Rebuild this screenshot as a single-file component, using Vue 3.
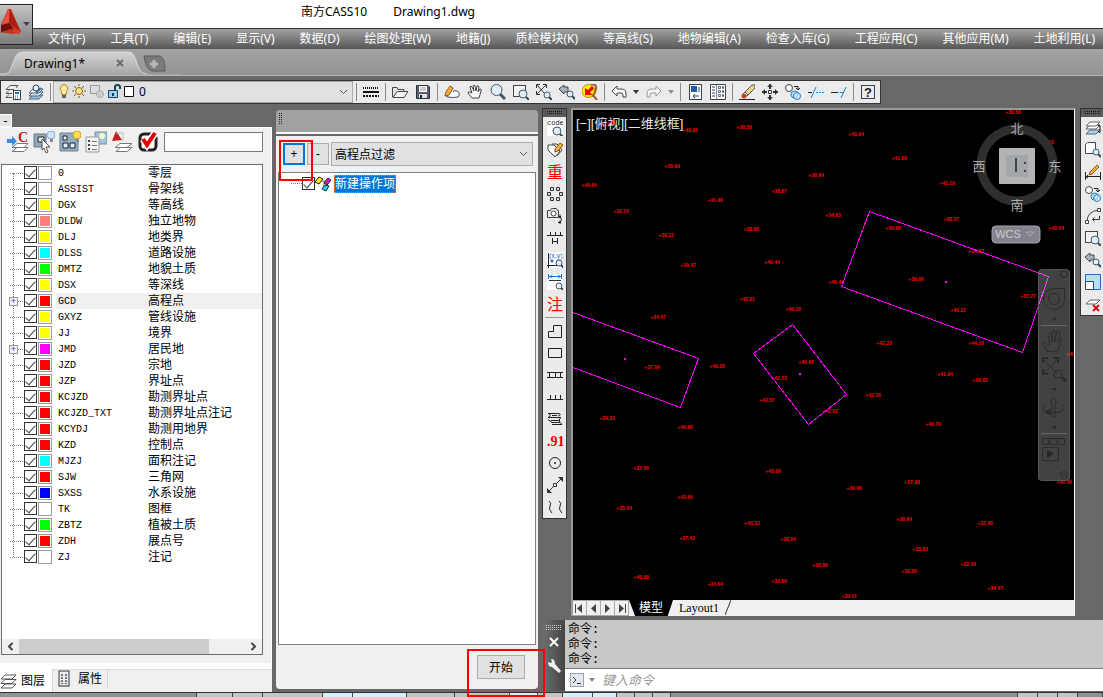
<template>
  <div class="app">
    <header class="title-bar">
      <span>南方CASS10</span>
      <span>Drawing1.dwg</span>
    </header>
    <button class="app-logo" aria-label="应用程序菜单">
      <svg width="31" height="39" viewBox="0 0 31 39">
        <path d="M7 4 L10 4 L20 27 L13 29 L-3 27 Z" fill="#c9311c" />
        <path d="M8 3 L-2 27 L8 18 Z" fill="#e8523a" />
        <path d="M9 5 L8 18 L20 27 Z" fill="#a81f12" />
        <path d="M0 20 L8 18 L15 26 L9 24 L-2 28 Z" fill="#6f0f0a" />
        <path d="M11 22 L20 26 L18 29 L13 28 Z" fill="#d63b22" />
        <path d="M22 17 h7 l-3.5 4 z" fill="#3b4350" />
      </svg>
    </button>

    <nav class="menu-bar">
      <a v-for="m in menus" :key="m" href="#">{{ m }}</a>
    </nav>

    <div class="doc-tabs">
      <svg class="tab-shape" width="180" height="26" viewBox="0 0 180 26">
        <defs>
          <linearGradient id="tabFill" x1="0" y1="0" x2="0" y2="1">
            <stop offset="0" stop-color="#d4d4d4" />
            <stop offset="1" stop-color="#a6a6a6" />
          </linearGradient>
        </defs>
        <path d="M0 25 H5 C14 25 12 3 22 3 H129 C138 3 135 25 147 25 H180 V26 H0 Z" fill="url(#tabFill)" />
        <path d="M0 25 H5 C14 25 12 3 22 3 H129 C138 3 135 25 147 25" fill="none" stroke="#d8d8d8" />
        <path d="M144 7 H160 Q165 9 165 22 H152 Q146 20 144 7 Z" fill="#7c7c7c" stroke="#5a5a5a" />
        <path d="M154 11 v8 M150 15 h8" stroke="#b8b8b8" stroke-width="3" />
        <path d="M117 11 l6 6 M123 11 l-6 6" stroke="#6a6a6a" stroke-width="2" />
      </svg>
      <button class="doc-tab">Drawing1*</button>
    </div>

    <div class="toolbar-row">
      <div class="toolbar">
        <template v-for="(t, i) in toolbar" :key="i">
          <i v-if="t === '|'" class="sep"></i>
          <div v-else-if="t === 'layer'" class="layer-combo">
            <svg width="80" height="18" viewBox="0 0 80 18" v-html="layerState"></svg>
            <select aria-label="当前图层">
              <option>0</option>
            </select>
            <svg class="chevron" width="9" height="6" viewBox="0 0 9 6"><path d="M1 1 L4.5 4.5 L8 1" fill="none" stroke="#555" /></svg>
          </div>
          <button v-else-if="t === 'v' || t === 'w'" class="drop" :class="{ faded: t === 'w' }" aria-label="更多">
            <svg width="6" height="4" viewBox="0 0 6 4"><path d="M0 0 h6 l-3 4 z" fill="#333" /></svg>
          </button>
          <button v-else class="tool" :aria-label="t">
            <svg width="16" height="16" viewBox="0 0 16 16" v-html="icons[t]"></svg>
          </button>
        </template>
      </div>
    </div>

    <main class="main">
      <aside class="layers">
        <button class="collapse" aria-label="折叠">-</button>
        <div class="layers-body">
          <div class="layers-tools">
            <button v-for="t in layerTools" :key="t" :aria-label="t">
              <svg width="22" height="22" viewBox="0 0 22 22" v-html="icons[t]"></svg>
            </button>
            <input v-model="keyword" type="text" aria-label="查找图层" />
          </div>
          <div class="tree-box">
            <ul class="tree">
              <li v-for="l in layers" :key="l.name" :class="{ current: l.name === 'GCD' }">
                <span class="expand"><button v-if="l.children" aria-label="展开">+</button></span>
                <input :id="'layer-' + l.name" v-model="l.on" type="checkbox" />
                <span class="swatch"><i :style="{ background: l.color }"></i></span>
                <label :for="'layer-' + l.name">
                  <span class="name">{{ l.name }}</span>
                  <span>{{ l.text }}</span>
                </label>
              </li>
            </ul>
            <div class="scroll">
              <button aria-label="向左"><svg width="7" height="9" viewBox="0 0 7 9"><path d="M5.5 1 L2 4.5 L5.5 8" fill="none" stroke="#444" stroke-width="2" /></svg></button>
              <div class="track"><div class="thumb"></div></div>
              <button aria-label="向右"><svg width="7" height="9" viewBox="0 0 7 9"><path d="M1.5 1 L5 4.5 L1.5 8" fill="none" stroke="#444" stroke-width="2" /></svg></button>
            </div>
          </div>
        </div>
        <div class="layers-tabs">
          <button class="active">
            <svg width="17" height="16" viewBox="0 0 17 16" v-html="icons.stack"></svg>图层
          </button>
          <button>
            <svg width="12" height="17" viewBox="0 0 12 17"><rect x="1" y="1" width="10" height="15" fill="#e8edf2" stroke="#333" /><path d="M4 4 v10 M8 4 v10" stroke="#777" stroke-width="2" stroke-dasharray="2 1" /></svg>属性
          </button>
        </div>
      </aside>

      <section class="filter">
        <div class="filter-head"><i class="dots"></i></div>
        <div class="filter-body">
          <div class="filter-row">
            <button class="btn primary">+</button>
            <button class="btn">-</button>
            <div class="combo">
              <select aria-label="操作类型">
                <option>高程点过滤</option>
              </select>
              <svg class="chevron" width="9" height="6" viewBox="0 0 9 6"><path d="M1 1 L4.5 4.5 L8 1" fill="none" stroke="#555" /></svg>
            </div>
            <div class="mark mark-add"></div>
          </div>
          <div class="op-box">
            <div class="op">
              <i class="branch"></i>
              <input id="op-1" v-model="opOn" type="checkbox" />
              <svg width="17" height="16" viewBox="0 0 17 16">
                <path d="M7 5 L12 5 M9 5 L9 12" stroke="#777" />
                <path d="M0 6 L4 1 L8 3 L4 8 Z" fill="#ffee00" stroke="#222" />
                <path d="M9 7 L13 2 L16 4 L12 9 Z" fill="#e010c0" stroke="#222" />
                <path d="M7 13 L10 9 L14 10 L11 15 Z" fill="#18d8e8" stroke="#222" />
              </svg>
              <label for="op-1">新建操作项</label>
            </div>
          </div>
          <div class="filter-foot">
            <button class="btn start">开始</button>
            <div class="mark mark-start"></div>
          </div>
        </div>
      </section>

      <section class="work">
        <div class="work-top">
          <div class="strip">
            <i class="grip"></i>
            <template v-for="(t, i) in drawTools" :key="i">
              <i v-if="t === '|'" class="hsep"></i>
              <button v-else class="vtool" :aria-label="t">
                <svg width="16" height="16" viewBox="0 0 16 16" v-html="icons[t]"></svg>
              </button>
            </template>
          </div>

          <div class="view">
            <svg class="canvas" viewBox="573 110 501 490" preserveAspectRatio="xMinYMin slice">
              <g class="heights">
                <text v-for="(p, i) in points" :key="i" :x="p[0]" :y="p[1] + 2">+{{ p[2] }}</text>
              </g>
              <g class="houses">
                <path d="M869.5 211.5 L1048.5 276.5 L1022.5 352.5 L841.5 286.5 Z" />
                <path d="M573 312.5 L698.5 358.5 L680.5 407.5 L573 367.5" />
                <path d="M792.5 324.5 L846.5 394.5 L808.5 424.5 L753.5 353.5 Z" />
              </g>
              <path d="M945 281h2v2h-2z M624 358h2v2h-2z M799 373h2v2h-2z" fill="#f0f" />
              <text class="view-label" x="576" y="128">[−][俯视][二维线框]</text>
              <g class="cube">
                <circle cx="1017" cy="165" r="36" />
                <rect x="999" y="148" width="36" height="36" rx="1" fill="#b4b4b4" />
                <rect x="1006" y="155" width="22" height="22" fill="#a3a7ab" />
                <path d="M1016 158 v14 M1024 163 h2 M1024 171 h2" stroke="#444" stroke-width="2" fill="none" />
                <text x="1017" y="133">北</text>
                <text x="1017" y="210">南</text>
                <text x="979" y="171">西</text>
                <text x="1055" y="171">东</text>
                <rect x="992" y="226" width="48" height="17" rx="4" fill="#83838d" stroke="#a4a4ac" />
                <text class="wcs" x="1008" y="238">WCS</text>
                <path d="M1026 232 h8 l-4 4 z" fill="none" stroke="#aaa" />
              </g>
              <g class="nav">
                <rect x="1038.5" y="269.5" width="31" height="211" rx="3" fill="#fff" fill-opacity=".26" stroke="#555" />
                <path d="M1041 325.5 h26 M1041 433.5 h26" stroke="#666" />
                <g fill="none" stroke="#2b2b2b">
                  <circle cx="1064" cy="274" r="4" fill="#333" stroke="none" />
                  <path d="M1062 272 l4 4 m0 -4 l-4 4" stroke="#555" />
                  <path d="M1054 288.5 h10.5 v10 a10.5 10.5 0 1 1 -10.5 -10 z" />
                  <circle cx="1054" cy="299" r="5.5" />
                  <path d="M1048 352 l-5 -8 q0 -3 3 -1 l3 3 v-12 q2 -3 3 0 v8 v-11 q2 -2 3 0 v11 l2 -10 q2 -2 3 1 l-2 10 l2 -5 q3 -1 2 2 l-4 10 q-4 3 -10 1 z" />
                  <path d="M1043 359 l15 15 M1058 359 l-15 15" />
                  <path d="M1043 363 v-5 h5 M1053 358 h5 v5 M1043 369 v5 h5" stroke-width="2" />
                  <circle cx="1058" cy="374" r="4" />
                  <path d="M1061 377 l5 4" stroke-width="3" />
                  <path d="M1052 417 v-14 h-2 l3.5 -6 l3.5 6 h-2 v14 z" />
                  <path d="M1062 405 q5 3 0 6 q-9 4 -18 0 q-4 -3 2 -6" />
                  <path d="M1050 409 v6 l-5 -3 z" fill="#2b2b2b" />
                  <path d="M1042.5 438.5 h6 v6 h-6 z m8 0 h6 v6 h-6 z m8 0 h6 v6 h-6 z M1042.5 447.5 h16 v13 h-16 z" />
                  <circle cx="1064" cy="475" r="3.5" />
                  <path d="M1062 475 h4" />
                </g>
                <path d="M1047 450 l7 4 l-7 4 z M1052 318 h5 l-2.5 3 z M1052 388 h5 l-2.5 3 z M1052 426 h5 l-2.5 3 z" fill="#262626" />
              </g>
            </svg>
            <div class="sheets">
              <button v-for="(d, i) in pager" :key="i" class="page" aria-label="翻页">
                <svg width="9" height="9" viewBox="0 0 9 9"><path :d="d" fill="#444" /></svg>
              </button>
              <button class="sheet model">模型</button>
              <button class="sheet">Layout1</button>
              <svg class="slash" width="6" height="15" viewBox="0 0 6 15"><path d="M0 15 L6 0" stroke="#333" /></svg>
            </div>
          </div>

          <div class="strip right">
            <i class="grip"></i>
            <button v-for="t in editTools" :key="t" class="vtool" :aria-label="t">
              <svg width="16" height="16" viewBox="0 0 16 16" v-html="icons[t]"></svg>
            </button>
          </div>
        </div>

        <div class="command">
          <div class="command-side">
            <i class="dots-h"></i>
            <svg width="10" height="10" viewBox="0 0 10 10"><path d="M1 1 l8 8 M9 1 l-8 8" stroke="#fff" stroke-width="2" /></svg>
            <svg width="15" height="15" viewBox="0 0 15 15"><path d="M1 3 l3 1 l1 -1 l-1 -3 q4 0 4 5 l6 7 l-2 2 l-7 -6 q-4 0 -4 -5 z" fill="#f2f2f2" /></svg>
          </div>
          <div class="command-main">
            <div class="history">
              <p v-for="n in 3" :key="n">命令:</p>
            </div>
            <div class="prompt">
              <svg width="14" height="14" viewBox="0 0 14 14"><rect x="0.5" y="0.5" width="13" height="13" fill="#e3e8ee" stroke="#9aa2ac" /><path d="M3 4 l3 3 l-3 3 M7 10.5 h4" fill="none" stroke="#333" /></svg>
              <svg width="6" height="4" viewBox="0 0 6 4"><path d="M0 0 h6 l-3 4 z" fill="#888" /></svg>
              <input v-model="command" type="text" placeholder="键入命令" aria-label="命令行" />
            </div>
          </div>
        </div>
      </section>
    </main>

    <footer class="status">
      <i v-for="(s, i) in status" :key="i" :class="s[1]" :style="{ flexBasis: s[0] + 'px' }"></i>
    </footer>
  </div>
</template>

<script setup>
import { ref } from 'vue'

const keyword = ref('')
const command = ref('')
const opOn = ref(true)

const menus = [
  '文件(F)', '工具(T)', '编辑(E)', '显示(V)', '数据(D)', '绘图处理(W)', '地籍(J)',
  '质检模块(K)', '等高线(S)', '地物编辑(A)', '检查入库(G)', '工程应用(C)', '其他应用(M)', '土地利用(L)'
]

const toolbar = [
  'layerprops', 'layerprev', '|', 'layer', '|', 'ltype', '|', 'open', 'save', '|',
  'cloud', 'hand', 'zoom', 'zoomwin', 'zoomext', 'zoomprev', 'zoomhot', '|',
  'undo', 'v', 'redo', 'w', '|', 'props', 'palette', '|',
  'erase', 'move', 'copy', 'trim', 'extend', '|', 'help'
]
const layerTools = ['lcass', 'lpick', 'lgroup', 'llist', 'lcad', 'lcheck']
const drawTools = [
  'code', 'tag', 'zhong', 'array', 'camera', 'fence', 'xy', 'dist', 'zhu', '|',
  'poly', 'rect', 'wall', 'ticks', 'scarp', 'elev', 'circle', 'line', 'curve'
]
const editTools = ['layeredit', 'boxzoom', 'dimedit', 'copy', 'arc', 'zoomwin', 'zoomprev', 'region', 'delarea']

const mk = (name, text, color, children = false) => ({ name, text, color, children, on: true })
const layers = ref([
  mk('0', '零层', '#fff'),
  mk('ASSIST', '骨架线', '#fff'),
  mk('DGX', '等高线', '#ff0'),
  mk('DLDW', '独立地物', '#ff7f7f'),
  mk('DLJ', '地类界', '#ff0'),
  mk('DLSS', '道路设施', '#0ff'),
  mk('DMTZ', '地貌土质', '#0f0'),
  mk('DSX', '等深线', '#ff0'),
  mk('GCD', '高程点', '#f00', true),
  mk('GXYZ', '管线设施', '#ff0'),
  mk('JJ', '境界', '#ff0'),
  mk('JMD', '居民地', '#f0f', true),
  mk('JZD', '宗地', '#f00'),
  mk('JZP', '界址点', '#f00'),
  mk('KCJZD', '勘测界址点', '#f00'),
  mk('KCJZD_TXT', '勘测界址点注记', '#f00'),
  mk('KCYDJ', '勘测用地界', '#f00'),
  mk('KZD', '控制点', '#f00'),
  mk('MJZJ', '面积注记', '#0ff'),
  mk('SJW', '三角网', '#f00'),
  mk('SXSS', '水系设施', '#00f'),
  mk('TK', '图框', '#fff'),
  mk('ZBTZ', '植被土质', '#0f0'),
  mk('ZDH', '展点号', '#f00'),
  mk('ZJ', '注记', '#fff')
])

// 高程点: x, y, 高程
const points = [
  [605, 124, '40.02'], [690, 130, '40.05'], [744, 127, '39.58'], [856, 134, '40.04'], [1013, 112, '39.50'],
  [1046, 142, '40.03'], [816, 175, '39.84'], [899, 158, '41.09'], [589, 185, '40.04'], [672, 166, '39.09'],
  [779, 191, '38.87'], [947, 183, '41.19'], [715, 200, '41.48'], [621, 211, '39.74'], [833, 215, '34.93'],
  [666, 235, '39.22'], [751, 229, '38.69'], [893, 228, '40.86'], [951, 219, '38.57'], [976, 251, '39.02'],
  [688, 265, '39.47'], [772, 262, '40.44'], [1056, 228, '40.54'], [747, 299, '40.61'], [836, 282, '40.44'],
  [916, 279, '39.95'], [658, 317, '34.67'], [793, 309, '40.18'], [958, 310, '40.22'], [1028, 296, '37.27'],
  [884, 343, '42.23'], [976, 343, '44.10'], [717, 366, '40.20'], [806, 362, '40.67'], [652, 367, '37.09'],
  [945, 374, '41.04'], [980, 380, '38.05'], [779, 378, '42.53'], [767, 400, '42.57'], [873, 395, '42.26'],
  [830, 411, '42.03'], [933, 424, '40.70'], [607, 418, '39.26'], [685, 427, '40.60'], [641, 468, '37.56'],
  [773, 471, '43.09'], [854, 488, '39.06'], [912, 482, '37.98'], [1064, 482, '40.36'], [685, 497, '43.60'],
  [624, 508, '35.34'], [752, 523, '40.32'], [904, 519, '39.84'], [985, 523, '32.46'], [687, 538, '37.42'],
  [788, 539, '38.04'], [920, 549, '33.83'], [820, 565, '38.80'], [968, 564, '32.18'], [909, 571, '30.09'],
  [641, 577, '40.68'], [715, 584, '34.64'], [779, 581, '34.89'], [995, 588, '34.47'], [849, 596, '39.31'],
  [1074, 354, '40.92']
]

const pager = [
  'M0 0h1v9h-1z M7 0v9l-5 -4.5z',
  'M7 0v9l-5 -4.5z',
  'M2 0v9l5 -4.5z',
  'M8 0h1v9h-1z M2 0v9l5 -4.5z'
]

const status = [
  [197, 'dark'], [36, ''], [30, ''], [60, ''], [30, 'lit'], [54, 'lit'], [48, ''], [55, ''], [28, 'lit'], [25, ''],
  [30, 'lit'], [24, 'lit'], [18, ''], [18, ''], [18, ''], [347, 'dark'], [20, ''], [20, ''], [20, ''], [25, 'dark']
]

// 小放大镜
const mag = (x, y, r = 3) =>
  `<path d="M${x + r - 1} ${y + r - 1} l3 3" stroke="#345" stroke-width="2"/><circle cx="${x}" cy="${y}" r="${r}" fill="#dff0fa" stroke="#445566"/>`
const sheet = (y, fill = '#fff') =>
  `<path d="M1 ${y + 4} L5 ${y} H15 L11 ${y + 4} Z" fill="${fill}" stroke="#5c646e"/>`
const line = (d, c = '#222', w = 1) => `<path d="${d}" fill="none" stroke="${c}" stroke-width="${w}"/>`
const glyph = (s, x, y, size, c) =>
  `<text x="${x}" y="${y}" font-size="${size}" fill="${c}" font-family="'Liberation Sans','Noto Sans CJK SC',sans-serif">${s}</text>`

const icons = {
  layerprops: line('M1 5.5 L5 1.5 H13 L11 4 M1 9.5 L4 6.5 M1 13.5 L4 10.5 M1 5.5 H9 M1 9.5 H7 M1 13.5 H7', '#555') +
    '<rect x="8.5" y="6.5" width="7" height="9" fill="#fff" stroke="#345"/><path d="M10 8h4v2h-4z" fill="#1c6fb8"/><path d="M10 12h1m1 0h1m-3 2h1m1 0h1" stroke="#345"/>',
  layerprev: sheet(11, '#8cc4ea') + sheet(8, '#c8e2f4') + sheet(5) + '<circle cx="8" cy="4" r="3" fill="#eee" stroke="#345"/><path d="M8 9l5 -5" stroke="#1c6fb8" stroke-width="2"/>',
  ltype: '<path d="M0 4h16" stroke="#111" stroke-width="2" stroke-dasharray="1 1"/><path d="M0 8h16" stroke="#111" stroke-width="2"/><path d="M0 12h16" stroke="#111" stroke-width="2" stroke-dasharray="2 1"/>',
  open: '<path d="M0.500 13 V3.500 H5 L6 5.500 H12 V7" fill="#e8e8e8" stroke="#444"/><path d="M1 13.500 L5 7.500 H16 L12 13.500 Z" fill="#f4f4f4" stroke="#444"/>',
  save: '<path d="M1.5 1.5 H13 L14.5 3 V14.5 H1.5 Z" fill="#56606c" stroke="#2b333d"/><path d="M4 2h8v6h-8z" fill="#fff"/><path d="M5 4h6M5 6h6" stroke="#999"/><path d="M4 10h8v4h-8z" fill="#dde"/><path d="M5 11h2v3h-2z" fill="#222"/>',
  cloud: '<path d="M4 9 Q0 12 4 13 Q10 14 14 13 Q17 9 13 7 Q10 6 9 8" fill="#fff" stroke="#446"/><path d="M2 8 L6 2 L9 4 L5 11 L1 12 Z" fill="#f4b13e" stroke="#8a5612"/>',
  hand: '<path d="M5 14 L1 9 Q1 7 3 8 L5 9 L3 3 Q4 1 5 3 L7 7 L6 2 Q7 0 8 2 L9 7 L10 2 Q11 1 12 3 L11 8 L13 5 Q15 5 14 7 L12 14 Z" fill="#fff" stroke="#444"/>',
  zoom: '<path d="M10 10 l5 5" stroke="#445566" stroke-width="3"/><circle cx="6.5" cy="6" r="5.5" fill="#dff0fa" stroke="#445566"/>',
  zoomwin: '<rect x="0.5" y="1.5" width="12" height="11" fill="#f4f4f4" stroke="#444"/>' + mag(10, 10, 4),
  zoomext: line('M1 1 L9 10 M10 1 L1 10 M0.500 4 V0.500 H4 M7 0.500 H10.500 V4 M0.500 7 V10.500 H4', '#333') + mag(11, 11),
  zoomprev: '<path d="M0 5 L5 1 V3 H9 V8 H5 V10 Z" fill="#aab3bd" stroke="#444"/>' + mag(11, 10),
  zoomhot: '<path d="M10 10 l5 6" stroke="#a06020" stroke-width="2"/><circle cx="6.5" cy="7" r="6.5" fill="#ffee00" stroke="#b09000"/><path d="M9 0 q6 0 5 5 t-4 7" fill="none" stroke="#a06020" stroke-width="2"/><path d="M3 4 L3 11 L10 11 L8 8 L12 5 L10 2 L6 6 Z" fill="#e80808"/>',
  undo: '<path d="M1 7 L6 2 V5 H10 Q15 5 15 10 V13 H12 V11 Q12 9 10 9 H6 V12 Z" fill="#fff" stroke="#444"/>',
  redo: '<path d="M15 7 L10 2 V5 H6 Q1 5 1 10 V13 H4 V11 Q4 9 6 9 H10 V12 Z" fill="#f5f5f5" stroke="#999"/>',
  props: '<rect x="2.5" y="0.5" width="12" height="15" fill="#fff" stroke="#345"/><path d="M4 2h6v6h-6z" fill="#1c5fa8"/><path d="M12 3v5M6 12h6M6 12l2-2M6 12l2 2" stroke="#345" fill="none"/>',
  palette: '<path d="M0.5 0.5h15v15h-15z" fill="#fff" stroke="#345"/><path d="M6.5 1v14" stroke="#889"/><path d="M2 3h3M2 6h3M2 9h3M2 12h3" stroke="#345"/><path d="M8.500 2.500h2v2h-2zm4 0h1v2h-1zM8.500 6.500h2v2h-2zm4 0h1v2h-1zM8.500 10.500h2v2h-2zm4 0h1v2h-1z" fill="none" stroke="#667"/>',
  erase: line('M0 15.5 H16') + '<path d="M5 9 L13 1 L16 1 V4 L8 12 Z" fill="#ecd28a" stroke="#555"/><path d="M3 11 L6 8 L9 11 L6 13 Z" fill="#fff" stroke="#555"/><circle cx="5" cy="12" r="2.5" fill="#c8401a"/>',
  move: line('M8 0 V5 M8 11 V16 M0 8 H5 M11 8 H16', '#333', 2) + '<path d="M8 0l3 3h-6zM8 16l3-3h-6zM0 8l3-3v6zM16 8l-3-3v6z" fill="#333"/><path d="M6.5 6.5h3v3h-3z" fill="#fff" stroke="#333"/>',
  copy: '<circle cx="4" cy="4" r="3.5" fill="#fff" stroke="#444"/>' + line('M9 2.5 H13 V6 M11 4 l2 2 l2 -2', '#222') + '<circle cx="9.5" cy="10.5" r="3.5" fill="#bfe0f5" stroke="#1c7fd0"/><circle cx="12" cy="12" r="3.5" fill="#dff0fa" fill-opacity=".6" stroke="#1c7fd0"/>',
  trim: line('M0 8.5 H4', '#222') + line('M3 14 L8 3', '#1c7fd0') + line('M8 8.5h2m1 0h2m1 0h2', '#1c7fd0'),
  extend: line('M0 8.5 H6', '#222') + line('M10 14 L15 3', '#1c7fd0') + line('M6 8.5h2m1 0h3', '#1c7fd0'),
  help: '<rect x="1.500" y="1.500" width="13" height="13" fill="#e8ecf0" stroke="#3a424c"/>' + '<text x="8" y="13" text-anchor="middle" font-size="13" font-weight="bold" fill="#222" font-family="Liberation Sans, sans-serif">?</text>',

  lcass: '<path d="M0 8h5v-3l5 5l-5 5v-3h-5z" fill="#3a8be0"/><path d="M5 20.500l5-4h11l-4 4z" fill="#fff" stroke="#777"/><path d="M5 16.500l5-4h11l-4 4z" fill="#fff" stroke="#777"/>' + '<text x="11" y="11" font-size="14" font-weight="bold" fill="#c01818" font-family="Liberation Serif, serif">C</text>',
  lpick: '<path d="M1 3h12v13h-12z" fill="#8fa9bb" stroke="#5f7484"/><path d="M5 6h6v5h-6z" fill="#e8f2f8" stroke="#222"/><path d="M9 8l8 8h-4l2 5l-2 1l-2-5l-2 2z" fill="#fff" stroke="#555"/><circle cx="18" cy="4" r="4" fill="#cfe4ff" stroke="#7fa6d8"/><path d="M17 8h3v3h-3z" fill="#888"/>',
  lgroup: '<path d="M1 2h18v18h-18z" fill="#8fb0c4" stroke="#6d8494"/><path d="M4 5h4v4h-4zM11 12h5v5h-5zM4 12h5v5h-5z" fill="#e4eef4" stroke="#222"/><circle cx="18" cy="4" r="4" fill="#ffe050" stroke="#d8a020"/><path d="M17 8h3v3h-3z" fill="#888"/>',
  llist: '<path d="M10 1h12v12h-12z" fill="#9ec4e0" stroke="#7890a0"/><circle cx="17" cy="5" r="3" fill="#fff8c0"/><path d="M1 6h13v15h-13z" fill="#f4f4f4" stroke="#999"/><path d="M3 10h2M3 14h2M3 18h2" stroke="#444" stroke-width="2"/><path d="M7 10.500h5M7 14.500h5M7 18.500h5" stroke="#777"/>',
  lcad: '<path d="M1 10L5 0l6 9z" fill="#c81c1c"/><path d="M5 2h7v8" fill="none" stroke="#bbb"/><path d="M4 16.500l5-4h12l-5 4z" fill="#fff" stroke="#777"/><path d="M5 20.500l4-4h12l-5 4z" fill="#fff" stroke="#777"/>',
  lcheck: '<rect x="3" y="3" width="16" height="16" rx="4" fill="#fff" stroke="#222" stroke-width="3"/><path d="M6 8l4 6l8-12" fill="none" stroke="#fff" stroke-width="7"/><path d="M6 8l4 6l8-12" fill="none" stroke="#e80000" stroke-width="4"/>',

  code: '<path d="M0 0h16v16h-16z" fill="#fff"/>' + '<text x="0" y="5" font-size="7" fill="#111" font-family="Liberation Mono, monospace">code</text>' + mag(10, 11, 4),
  tag: '<path d="M1 3h6l6 6l-5 6l-7-7z" fill="#fff" stroke="#444"/><path d="M5 2h5l5 6l-5 6" fill="none" stroke="#444"/><path d="M8 7l5-6l3 2l-5 6l-3 1z" fill="#f4b13e" stroke="#8a5612"/>',
  zhong: glyph('重', 0, 14, 16, '#f00'),
  zhu: glyph('注', 0, 14, 16, '#f00'),
  array: '<path d="M3.5 1.5h3v3h-3zM9.5 1.5h3v3h-3zM0.5 6.5h3v3h-3zM12.5 6.5h3v3h-3zM3.5 11.5h3v3h-3zM9.5 11.5h3v3h-3z" fill="#cfe0ea" stroke="#333"/>',
  camera: '<path d="M0.5 2.5h3l1-2h5l1 2h1v7h-11z" fill="#e8edf2" stroke="#444"/><circle cx="6.5" cy="5.5" r="2.5" fill="#fff" stroke="#444"/>' + line('M12 8.500 q5 3 0 6 M11 8.500h3M13 6.500v4M11 14.500h3M13 12.500v4', '#222'),
  fence: line('M0 5.5H16M3.5 5V2M8.5 5V2M13.5 5V2M5.5 8V14M10.5 8V14M5.5 11.5H10'),
  xy: '<path d="M0 0h16v16h-16z" fill="#fff"/>' + line('M1.5 1V16M0 13.5H15') + '<text x="2" y="6" font-size="7" fill="#1c6fd0" font-family="Liberation Sans, sans-serif">(x,y)</text><circle cx="5" cy="9" r="1.5" fill="#1c6fd0"/>' + mag(12, 11),
  dist: '<path d="M0 0h16v16h-16z" fill="#fff"/>' + line('M2 2.5H14M1.500 0V5M14.500 0V5M5 0.500l-2 2l2 2M11 0.500l2 2l-2 2', '#1c6fd0') + line('M2 6.5H14', '#333') + mag(12, 12),
  poly: line('M1.5 14.5V8.5H6.5V2.5H14.5V14.5Z', '#222', 1),
  rect: line('M1.5 3.5H14.5V12.5H1.5Z'),
  wall: line('M0 5.5H16M0 10.5H16M2.5 5V11M8.5 5V11M13.5 5V11'),
  ticks: line('M0 10.5H16M3.5 6V10M8.5 6V10M13.5 6V10'),
  scarp: line('M1 2.500 H12 M2 3 Q5 5 1 6.500 H14 M4 9.500 H13 M5 4.500 H10 M12 2.500 Q15 4 11 5 M14 6.500 Q10 9 15 13.500 H5 M1 8.500 l4 3 h8'),
  elev: '<text x="0" y="13" font-size="14" font-weight="bold" fill="#f00" font-family="Liberation Serif, serif">.91</text>',
  circle: '<circle cx="8" cy="8" r="5.5" fill="none" stroke="#222"/><path d="M7 8h2M8 7v2" stroke="#222"/>',
  line: line('M2 14L14 2', '#333') + '<path d="M0 16v-5l5 5zM16 0v5l-5-5z" fill="#333"/><path d="M6.500 6.500h3v3h-3z" fill="#fff" stroke="#333"/>',
  curve: line('M2 2 Q5 4 3 7 Q1 10 5 14M12 2 Q15 4 13 7 Q11 10 15 14'),

  layeredit: sheet(5) + sheet(2) + sheet(10, '#a9d5f5') + line('M13 5.5h2v7l-2 -1', '#111'),
  boxzoom: '<path d="M0.500 2.500l2-2h8v9l-2 2h-8z" fill="#fff" stroke="#445"/>' + mag(11, 10, 3),
  dimedit: line('M0.5 8V16M15.5 8V16M0 12.5H16M3 11l-2 2l2 1') + '<path d="M5 8l7-7l2 2l-7 7l-3 1z" fill="#f4b13e" stroke="#8a5612"/>',
  arc: line('M2 14 Q2 3 14 2', '#444') + '<path d="M0.5 12.5h3v3h-3zM12.5 0.5h3v3h-3z" fill="#fff" stroke="#444"/>' + line('M14.5 8v3.500h-7M9.500 9.500l-2 2l2 2', '#333'),
  region: '<path d="M0.5 0.5h15v15h-15z" fill="#b6def5" stroke="#1c6fb8"/><path d="M0.5 7.5h8v8h-8z" fill="#fff" stroke="#345"/>',
  delarea: sheet(4) + line('M8 9l6 6M14 9l-6 6', '#d01010', 2),
  stack: '<path d="M1 15l4-4h11l-4 4z" fill="#fff" stroke="#555"/><path d="M1 10.5l4-4h11l-4 4z" fill="#fff" stroke="#555"/><path d="M1 6l4-4h11l-4 4z" fill="#fff" stroke="#555"/>'
}

const layerState =
  '<path d="M10 1.5a4 4 0 0 1 2.5 7v3h-5v-3a4 4 0 0 1 2.5-7z" fill="#ffe89a" stroke="#a68a30"/><path d="M8 12h4v3h-4z" fill="#666"/>' +
  '<circle cx="25" cy="8" r="3.5" fill="#ffe08a" stroke="#8a6a20"/><path d="M25 1v2M25 13v2M18 8h2M30 8h2M20 3l2 2M28 11l2 2M30 3l-2 2M22 11l-2 2" stroke="#7a6020"/>' +
  '<path d="M36.500 2.500h9v8h-9z" fill="#ddd" stroke="#999"/><circle cx="46" cy="11" r="3.5" fill="#ccc" stroke="#aaa"/>' +
  '<path d="M54.5 7.5h9v7h-9z" fill="#9ad0f0" stroke="#15435f"/><path d="M61 7v-3q0-2 2.500-2t2.500 2v2" fill="none" stroke="#15435f" stroke-width="2"/><path d="M59 10v3" stroke="#15435f" stroke-width="2"/>' +
  '<path d="M70.5 3.5h9v10h-9z" fill="#fff" stroke="#111"/>'
</script>

<style>
body {
  margin: 0;
  background: #686868;
}
</style>

<style scoped>
.app {
  position: relative;
  display: flex;
  flex-direction: column;
  min-height: 100vh;
  overflow: hidden;
  background: #686868;
  font: 12px/16px 'Noto Sans', 'Noto Sans CJK SC', sans-serif;
  color: #000;
}

.app * {
  box-sizing: border-box;
}

button,
input,
select {
  margin: 0;
  padding: 0;
  border: 0;
  border-radius: 0;
  background: none;
  font: inherit;
  color: inherit;
}

button {
  display: flex;
  align-items: center;
  justify-content: center;
}

select {
  appearance: none;
  width: 100%;
  height: 100%;
}

svg {
  display: block;
  flex: none;
}

.title-bar {
  display: flex;
  gap: 26px;
  height: 28px;
  padding-left: 301px;
  background: #fff;
  line-height: 24px;
}

.app-logo {
  position: absolute;
  left: -1px;
  top: 4px;
  z-index: 2;
  width: 34px;
  height: 41px;
  border: 1px solid #222;
  background: linear-gradient(#c4c4c4, #7c7c7c);
}

.menu-bar {
  display: flex;
  gap: 25px;
  height: 21px;
  padding-left: 48px;
  border-top: 1px solid #333;
  background: linear-gradient(#a2a2a2, #565656);
  white-space: nowrap;
}

.menu-bar a {
  color: #fff;
  line-height: 20px;
  text-decoration: none;
}

.doc-tabs {
  position: relative;
  height: 27px;
  border-bottom: 1px solid #b4b4b4;
  background: linear-gradient(#a2a2a2, #949494);
}

.tab-shape {
  position: absolute;
}

.doc-tab {
  position: relative;
  height: 28px;
  padding: 1px 24px 0;
}

.toolbar-row {
  display: flex;
  padding: 4px 0 0;
}

.toolbar {
  display: flex;
  height: 24px;
  padding-right: 1px;
  border: 1px solid #333;
  background: #ebebeb;
}

.tool {
  width: 23px;
}

.drop {
  width: 12px;
}

.faded {
  opacity: 0.5;
}

.sep {
  width: 6px;
  margin: 2px 0;
  background: linear-gradient(#888, #888) center / 1px 100% no-repeat;
}

.layer-combo {
  position: relative;
  display: flex;
  align-items: center;
  width: 300px;
  border: 1px solid #aaa;
  background: #e1e1e1;
}

.layer-combo select {
  padding-left: 5px;
}

.chevron {
  position: absolute;
  right: 4px;
  top: 50%;
  margin-top: -3px;
  pointer-events: none;
}

.main {
  display: flex;
  flex: 1;
  gap: 4px;
}

.layers {
  display: flex;
  flex-direction: column;
  width: 272px;
  padding-top: 10px;
}

.collapse {
  width: 12px;
  height: 13px;
  border: 1px solid #fff;
  border-left: 0;
  background: #e4e4e4;
}

.layers-body {
  display: flex;
  flex: 1;
  flex-direction: column;
  padding: 4px 8px 8px 1px;
  border: solid #fff;
  border-width: 1px 1px 0 0;
  background: #f0f0f0;
}

.layers-tools {
  display: flex;
  align-items: center;
  gap: 4px;
  height: 20px;
  margin-bottom: 12px;
  padding-left: 6px;
}

.layers-tools input {
  flex: 1;
  min-width: 0;
  height: 20px;
  margin-left: 1px;
  padding: 0 4px;
  border: 1px solid #7a7a7a;
  background: #fff;
}

.tree-box {
  display: flex;
  flex: 1;
  flex-direction: column;
  justify-content: space-between;
  border: 1px solid #6c6c6c;
  background: #fff;
}

.tree {
  position: relative;
  margin: 0;
  padding: 0 0 0 1px;
  list-style: none;
}

.tree::before {
  content: '';
  position: absolute;
  left: 11px;
  top: 8px;
  bottom: 8px;
  border-left: 1px dotted #777;
}

.tree li {
  display: flex;
  align-items: flex-start;
  height: 16px;
}

.tree input,
.swatch {
  margin-top: 1px;
}

.expand {
  display: flex;
  align-items: center;
  width: 21px;
  height: 16px;
  padding-left: 6px;
  background: linear-gradient(90deg, #888 50%, transparent 50%) right 8px / 2px 1px repeat-x;
  background-clip: content-box;
  background-origin: content-box;
}

.expand button {
  position: relative;
  width: 9px;
  height: 9px;
  border: 1px solid #999;
  background: #f4f4f4;
  color: #2a4a9a;
  font: 9px/7px 'Liberation Sans', sans-serif;
}

input[type='checkbox'] {
  appearance: none;
  display: grid;
  place-items: start center;
  flex: none;
  width: 13px;
  height: 13px;
  border: 1px solid #333;
  background: #fff;
}

input[type='checkbox']:checked::before {
  content: '';
  width: 4px;
  height: 9px;
  border: solid #444;
  border-width: 0 1px 1px 0;
  transform: rotate(42deg);
}

.swatch {
  width: 14px;
  height: 14px;
  margin-right: 4px;
  margin-left: 1px;
  padding: 1px;
  border: 1px solid #9c9c9c;
}

.swatch i {
  display: block;
  height: 10px;
}

.tree label {
  display: flex;
  flex: 1;
  height: 16px;
  padding-left: 2px;
  font-family: 'Liberation Mono', 'Noto Sans CJK SC', monospace;
  line-height: 18px;
}

.name {
  width: 90px;
  font-family: 'Liberation Mono', monospace;
  font-size: 10px;
}

.current label {
  background: #f0f0f0;
}

.scroll {
  display: flex;
  height: 15px;
  background: #f0f0f0;
}

.scroll button {
  width: 17px;
}

.track {
  flex: 1;
}

.thumb {
  width: 84%;
  height: 15px;
  background: #cdcdcd;
}

.layers-tabs {
  display: flex;
  height: 29px;
  padding-top: 6px;
  background: linear-gradient(#fff 6px, #dcdcdc 6px, #dcdcdc 7px, #f0f0f0 7px);
}

.layers-tabs button {
  gap: 8px;
  width: 55px;
  height: 19px;
  border-right: 1px solid #d4d4d4;
}

.layers-tabs .active {
  justify-content: flex-start;
  width: 53px;
  height: 23px;
  gap: 4px;
  background: #fff;
}

.filter {
  display: flex;
  flex-direction: column;
  width: 262px;
  margin: 6px 0 3px;
}

.filter-head {
  height: 26px;
  padding: 3px;
  border-bottom: 2px solid #686868;
  border-radius: 4px 4px 0 0;
  background: linear-gradient(#a2a2a2 22px, #f8f8f8 22px);
}

.dots {
  display: block;
  width: 3px;
  height: 11px;
  background: conic-gradient(transparent 75%, #222 0) 0 0 / 2px 2px;
}

.filter-body {
  display: flex;
  flex: 1;
  flex-direction: column;
  padding: 6px 2px 10px;
  border-radius: 0 0 4px 4px;
  background: #f0f0f0;
}

.filter-row {
  position: relative;
  display: flex;
  gap: 2px;
  height: 24px;
  margin-bottom: 6px;
  padding: 0 3px 0 5px;
}

.btn {
  width: 22px;
  height: 22px;
  border: 1px solid #adadad;
  background: #e1e1e1;
}

.filter-row .btn {
  margin-top: 1px;
}

.btn.primary {
  border: 2px solid #0078d7;
}

.combo {
  position: relative;
  flex: 1;
  border: 1px solid #adadad;
  background: #e1e1e1;
}

.combo select {
  padding: 2px 0 0 3px;
}

.mark {
  position: absolute;
  border: 2px solid #f00;
  pointer-events: none;
}

.mark-add {
  left: 1px;
  top: -2px;
  width: 34px;
  height: 41px;
}

.op-box {
  flex: 1;
  border: 1px solid #7f7f88;
  background: #fff;
}

.op {
  display: flex;
  align-items: center;
  height: 20px;
  padding: 1px 0 0 12px;
}

.branch {
  width: 11px;
  border-top: 1px dotted #777;
}

.op label {
  margin-left: 2px;
  border: 1px dotted #f08020;
  background: #0078d7;
  color: #fff;
  line-height: 16px;
}

.filter-foot {
  position: relative;
  display: flex;
  justify-content: flex-end;
  padding: 10px 11px 0 0;
}

.start {
  width: 48px;
  height: 24px;
  padding-top: 1px;
}

.mark-start {
  z-index: 3;
  right: -9px;
  top: 4px;
  width: 78px;
  height: 48px;
}

.work {
  display: flex;
  flex: 1;
  flex-direction: column;
  gap: 4px;
  min-width: 0;
  padding: 4px 0 1px;
}

.work-top {
  display: flex;
  flex: 1;
  gap: 4px;
}

.strip {
  display: flex;
  flex: none;
  flex-direction: column;
  align-self: flex-start;
  width: 25px;
  border: 1px solid #333;
  background: #ebebeb;
}

.strip.right {
  margin: 0 -2px 0 1px;
}

.grip {
  height: 8px;
  border: solid #5a5a5a;
  border-width: 2px 4px;
  background: conic-gradient(#5a5a5a 75%, #111 0) 0 0 / 2px 2px;
}

.vtool {
  height: 22px;
}

.hsep {
  height: 5px;
  margin: 0 2px;
  background: linear-gradient(#999, #999) center / 100% 1px no-repeat;
}

.view {
  position: relative;
  display: flex;
  flex: 1;
  flex-direction: column;
  min-width: 0;
  border: 2px solid #9a9a9a;
  border-right: 1px solid #fff;
  border-bottom: 0;
  background: #000;
}

.canvas {
  flex: 1 1 0;
  width: 100%;
  min-height: 0;
}

.heights {
  fill: #f00;
  font: bold 5px 'Liberation Sans', sans-serif;
  text-anchor: middle;
}

.houses {
  fill: none;
  stroke: #f0f;
  shape-rendering: crispEdges;
}

.view-label {
  fill: #e8e8e8;
  font: 13px 'Liberation Sans', 'Noto Sans CJK SC', sans-serif;
}

.cube circle {
  fill: none;
  stroke: #2e2e2e;
  stroke-width: 9;
}

.cube text {
  fill: #aaa;
  font: 13px 'Noto Sans CJK SC', sans-serif;
  text-anchor: middle;
}

.cube .wcs {
  fill: #ccc;
  font: 11px 'Liberation Sans', sans-serif;
}

.sheets {
  display: flex;
  height: 16px;
  background: #f0f0f0;
}

.page {
  width: 14px;
  border: 1px solid #aaa;
  border-left: 0;
}

.sheet {
  padding: 0 6px;
  font: 12px/14px 'Liberation Serif', 'Noto Sans CJK SC', serif;
}

.sheet.model {
  width: 44px;
  background: #000;
  color: #fff;
  clip-path: polygon(0 0, 100% 0, 88% 100%, 14% 100%);
}

.command {
  display: flex;
  flex: none;
  height: 71px;
  margin-left: 1px;
}

.command-side {
  display: flex;
  flex-direction: column;
  align-items: center;
  gap: 12px;
  width: 22px;
  padding-top: 5px;
  background: linear-gradient(90deg, #6e6e6e, #444);
}

.dots-h {
  width: 16px;
  height: 5px;
  margin-bottom: -5px;
  background: conic-gradient(transparent 75%, #ccc 0) 0 0 / 2px 2px;
}

.command-main {
  display: flex;
  flex: 1;
  flex-direction: column;
}

.history {
  flex: 1;
  padding: 3px 3px 0;
  border-bottom: 1px solid #777;
  background: #c8c8c8;
}

.history p {
  margin: 0;
  font-family: 'Liberation Mono', 'Noto Sans CJK SC', monospace;
  line-height: 15px;
}

.prompt {
  display: flex;
  align-items: center;
  gap: 5px;
  height: 22px;
  padding-left: 5px;
  background: #fff;
}

.prompt input {
  flex: 1;
  height: 20px;
  padding-left: 2px;
  outline: none;
  font-size: 13px;
}

.prompt input::placeholder {
  color: #999;
  font-style: italic;
}

.status {
  display: flex;
  height: 5px;
  border-top: 1px solid #333;
  background: #999;
}

.status i {
  flex: 0 1 auto;
  border-right: 1px solid #444;
  background: #c4c4c4;
}

.status .dark {
  background: #929292;
}

.status .lit {
  background: #d8eef8;
}
</style>
